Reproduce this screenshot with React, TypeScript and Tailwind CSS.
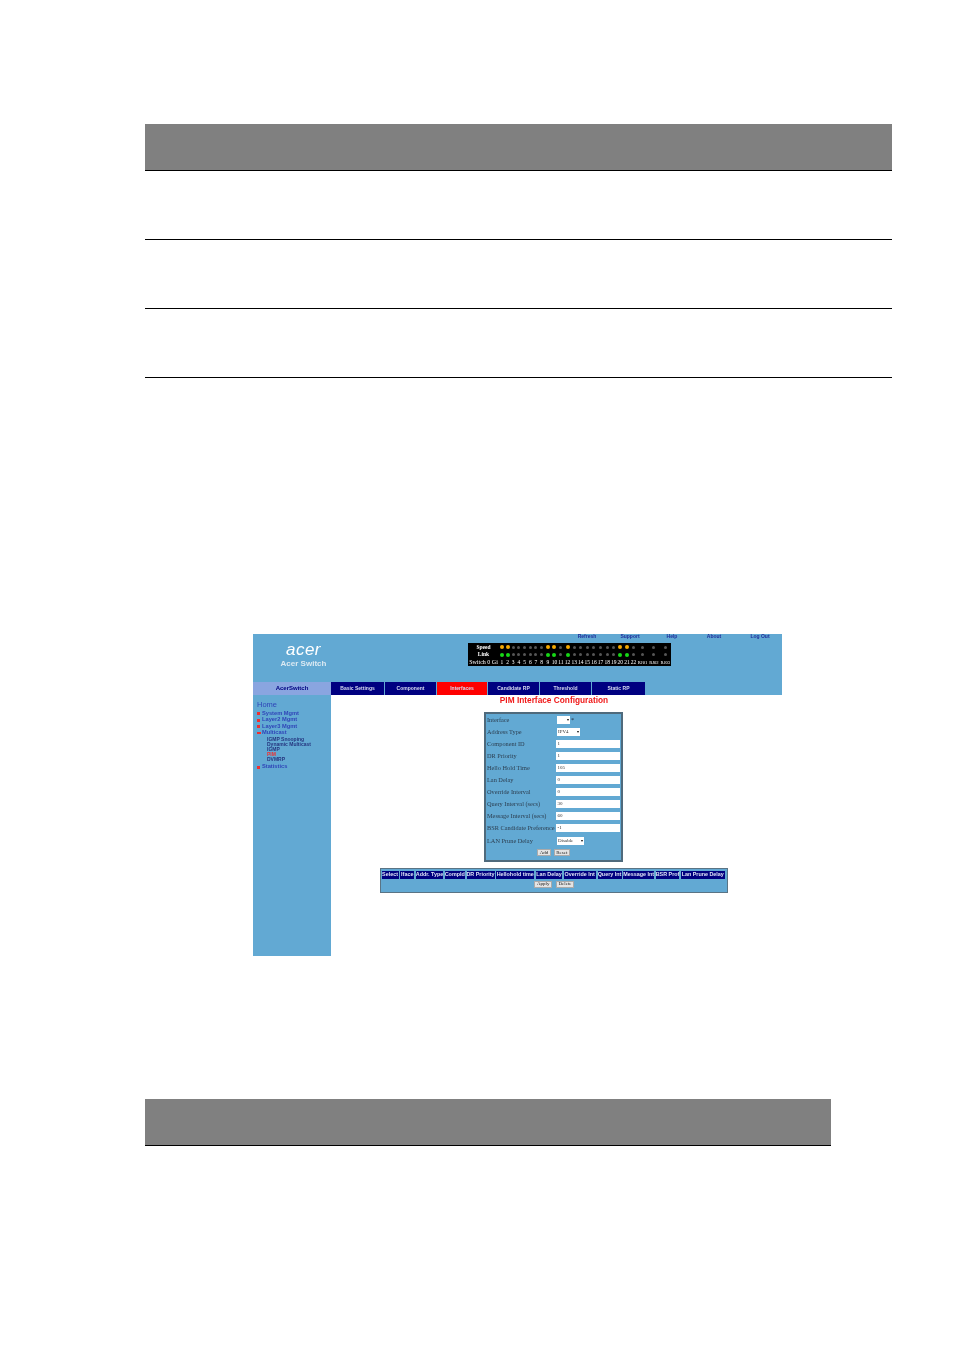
const ledOn = [1, 2, 9, 10, 12, 20, 21]
const ports = Array.from({ length: 25 }, (_, i) => i + 1)
const portNames = [...ports.slice(0, 22).map(String), "RJ01", "RJ02", "RJ03"]

const links = [
  { label: "Refresh", cls: "ml-[323px] w-[22px]" },
  { label: "Support", cls: "ml-[21px] w-[22px]" },
  { label: "Help", cls: "ml-[25px] w-[12px]" },
  { label: "About", cls: "ml-[28px] w-[16px]" },
  { label: "Log Out", cls: "ml-[27px] w-[22px]" },
]

const tabs = [
  { label: "Basic Settings", cls: "w-[53px] bg-[#000080]" },
  { label: "Component", cls: "w-[51px] bg-[#000080]" },
  { label: "Interfaces", cls: "w-[50px] bg-[#ff0000]" },
  { label: "Candidate RP", cls: "w-[51px] bg-[#000080]" },
  { label: "Threshold", cls: "w-[51px] bg-[#000080]" },
  { label: "Static RP", cls: "w-[53px] bg-[#000080]" },
]

const formRows = [
  { label: "Component ID", value: "1" },
  { label: "DR Priority", value: "1" },
  { label: "Hello Hold Time", value: "105" },
  { label: "Lan Delay", value: "0" },
  { label: "Override Interval", value: "0" },
  { label: "Query Interval (secs)", value: "30" },
  { label: "Message Interval (secs)", value: "60" },
  { label: "BSR Candidate Preference", value: "-1" },
]

const columns = [
  { label: "Select", cls: "w-[17px]" },
  { label: "Iface", cls: "w-[14px]" },
  { label: "Addr. Type", cls: "w-[27px]" },
  { label: "CompId", cls: "w-[20px]" },
  { label: "DR Priority", cls: "w-[28px]" },
  { label: "Hellohold time", cls: "w-[38px]" },
  { label: "Lan Delay", cls: "w-[26px]" },
  { label: "Override Int", cls: "w-[32px]" },
  { label: "Query Int", cls: "w-[24px]" },
  { label: "Message Int", cls: "w-[31px]" },
  { label: "BSR Prof", cls: "w-[23px]" },
  { label: "Lan Prune Delay", cls: "w-[44px]" },
]

function Select({ label, cls }: { label: string; cls: string }) {
  return (
    <div className={`h-[8px] bg-white flex items-center justify-between px-[1px] text-[5px] text-[#333] ${cls}`}>
      <span>{label}</span>
      <span className="text-[4px] text-black">▾</span>
    </div>
  )
}

function SmallButton({ label }: { label: string }) {
  return (
    <div className="h-[7px] px-[1.5px] bg-[#e4e4e4] border-[0.5px] border-[#aaa] flex items-center text-[5px] text-[#222]">
      {label}
    </div>
  )
}

function Bullet({ label, open }: { label: string; open?: boolean }) {
  return (
    <div className="h-[6.5px] flex items-center text-[5.7px] leading-none font-bold text-[#2f45b8]">
      <span className={`bg-[#f03030] ${open ? "w-[4px] h-[2px] mr-[1px]" : "w-[2.5px] h-[3px] mr-[2.5px]"}`} />
      {label}
    </div>
  )
}

function LedRow({ label, color }: { label: string; color: string }) {
  return (
    <>
      <div className="text-center text-white font-bold text-[5.5px] leading-[7.5px]">{label}</div>
      {ports.map((p) => (
        <div key={p} className="flex items-center justify-center">
          <span
            className={`rounded-full ${ledOn.includes(p) ? `w-[4px] h-[4px] ${color}` : "w-[3px] h-[3px] bg-[#555]"}`}
          />
        </div>
      ))}
    </>
  )
}

export default function App() {
  return (
    <div className="w-[954px] h-[1369px] bg-white pt-[124px] pl-[145px] font-['Liberation_Serif',serif]">
      {/* Top table */}
      <div className="w-[747px]">
        <div className="h-[47px] bg-[#808080] border-b border-black" />
        <div className="h-[69px] border-b border-black" />
        <div className="h-[69px] border-b border-black" />
        <div className="h-[69px] border-b border-black" />
      </div>

      {/* Screenshot */}
      <div className="ml-[108px] mt-[256px] w-[529px] blur-[0.5px] font-['Liberation_Sans',sans-serif]">
        <div className="h-[61px] bg-[#62a9d3] flex flex-col">
          <div className="h-[9px] flex items-start text-[5px] leading-[5px] font-bold text-[#1f2f9c]">
            {links.map((l) => (
              <div key={l.label} className={`${l.cls} whitespace-nowrap text-center`}>
                {l.label}
              </div>
            ))}
          </div>
          <div className="flex h-[39px]">
            <div className="w-[215px] pl-[27px] flex flex-col items-start">
              <div className="w-[47px] -mt-[1px] text-center italic text-white text-[17px] leading-[15px] tracking-[0.5px]">
                acer
              </div>
              <div className="w-[47px] mt-[2px] text-center whitespace-nowrap font-bold text-[#dbe9f2] text-[8px] leading-[10px]">
                Acer Switch
              </div>
            </div>
            <div className="h-[23px] w-[203px] bg-black pt-[0.5px] font-['Liberation_Serif',serif] grid grid-cols-[31px_repeat(8,5.7px)_repeat(14,6.6px)_repeat(3,11.4px)] content-start">
              <LedRow label="Speed" color="bg-[#f5a800]" />
              <LedRow label="Link" color="bg-[#16d816]" />
              <div className="text-white text-[6px] leading-[7.5px] whitespace-nowrap text-center">Switch 0 Gi</div>
              {portNames.map((n, i) => (
                <div
                  key={n}
                  className={`text-white leading-[7.5px] text-center whitespace-nowrap overflow-hidden ${i > 21 ? "text-[4.6px]" : "text-[5.5px]"}`}
                >
                  {n}
                </div>
              ))}
            </div>
          </div>
          <div className="h-[13px] flex">
            <div className="w-[78px] bg-[#8aa5e0] flex items-center justify-center text-[6px] font-bold text-[#000080]">
              AcerSwitch
            </div>
            {tabs.map((t) => (
              <div
                key={t.label}
                className={`${t.cls} mr-[1px] pt-[1px] flex items-center justify-center text-[5px] font-bold text-[#d8dcf0] whitespace-nowrap`}
              >
                {t.label}
              </div>
            ))}
          </div>
        </div>

        <div className="flex h-[261px]">
          {/* Sidebar */}
          <div className="w-[78px] bg-[#62a9d3] pl-[4px] pt-[6px] shrink-0">
            <div className="text-[7.5px] leading-[8px] text-[#2f45b8] mb-[1.5px]">Home</div>
            <Bullet label="System Mgmt" />
            <Bullet label="Layer2 Mgmt" />
            <Bullet label="Layer3 Mgmt" />
            <Bullet label="Multicast" open />
            <div className="pl-[10px] pb-[1.5px] text-[5px] leading-[5.2px] text-[#25357f] font-bold">
              <div>IGMP Snooping</div>
              <div>Dynamic Multicast</div>
              <div>IGMP</div>
              <div className="text-[#f03030]">PIM</div>
              <div>DVMRP</div>
            </div>
            <Bullet label="Statistics" />
          </div>

          {/* Main content */}
          <div className="flex-1 min-w-0">
            <div className="h-[17px] w-[446px] text-center text-[8.3px] leading-[10px] font-bold text-[#f01818]">
              PIM Interface Configuration
            </div>

            <div className="ml-[153px] w-[139px] h-[150px] bg-[#62a9d3] border-2 border-[#4f6a7c] px-[1px] font-['Liberation_Serif',serif] text-[6.3px] text-[#2c3e50]">
              <div className="h-[11px] flex items-center">
                <div className="w-[70px]">Interface</div>
                <Select label="" cls="w-[13px]" />
                <span className="ml-[1px] text-[#223]">*</span>
              </div>
              <div className="h-[13px] flex items-center">
                <div className="w-[70px]">Address Type</div>
                <Select label="IPV4" cls="w-[23px]" />
              </div>
              {formRows.map((r) => (
                <div key={r.label} className="h-[12px] flex items-center">
                  <div className="w-[70px] whitespace-nowrap">{r.label}</div>
                  <div className="w-[64px] h-[8px] bg-white px-[1px] flex items-center text-[5px] text-[#333]">
                    {r.value}
                  </div>
                </div>
              ))}
              <div className="h-[13px] flex items-center">
                <div className="w-[70px]">LAN Prune Delay</div>
                <Select label="Disable" cls="w-[27px]" />
              </div>
              <div className="h-[11px] flex items-center justify-center gap-[3px]">
                <SmallButton label="Add" />
                <SmallButton label="Reset" />
              </div>
            </div>

            <div className="ml-[49px] mt-[6px] w-[348px] h-[25px] bg-[#62a9d3] border-[1.5px] border-[#5a7485] pt-[1.5px] pl-[0.5px]">
              <div className="h-[8px] flex gap-[1.75px]">
                {columns.map((c) => (
                  <div
                    key={c.label}
                    className={`${c.cls} shrink-0 bg-[#000080] flex items-center justify-center whitespace-nowrap text-[5.4px] font-bold text-[#dfe3f5]`}
                  >
                    {c.label}
                  </div>
                ))}
              </div>
              <div className="flex justify-center gap-[4px] pt-[2px] font-['Liberation_Serif',serif]">
                <SmallButton label="Apply" />
                <SmallButton label="Delete" />
              </div>
            </div>
          </div>
        </div>
      </div>

      {/* Bottom table header */}
      <div className="mt-[143px] w-[686px] h-[47px] bg-[#808080] border-b border-black" />
    </div>
  )
}
